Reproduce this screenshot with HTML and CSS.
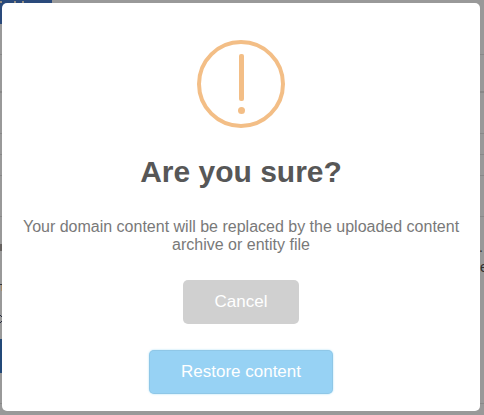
FILE: index.html
```html
<!DOCTYPE html>
<html lang="en">
<head>
<meta charset="utf-8">
<title>Restore content</title>
<link rel="stylesheet" href="styles.css">
</head>
<body>
<div class="page" aria-hidden="true">
  <div class="row row-top"><div class="tab"><svg width="52" height="3"><path d="M0 2h2M14 2h2M22 2h2" stroke="#958f84" stroke-width="2"/></svg></div></div>
  <div class="row row-head"></div>
  <div class="row row-tall"></div>
  <div class="row row-line"></div>
  <div class="row row-line"></div>
  <div class="row row-tall"></div>
  <div class="row row-body">
    <div class="side">
      <svg class="traces" width="2" height="122"><path d="M0 27h2v7H0z" fill="#65615f"/><path d="M0 67h2v1H0z" fill="#30343b"/><path d="M1 68h1v6H1z" fill="#a58b6b"/><path d="M0 98h1v1H0zM1 99h1v1H1zM1 104h1v1H1zM0 105h1v1H0z" fill="#252b3d"/></svg>
      <div class="action"></div>
    </div>
    <div class="remainder"><span>.</span><span>e</span></div>
  </div>
  <div class="row row-end"></div>
</div>
<main class="modal" role="dialog" aria-labelledby="title">
  <svg class="icon" width="88" height="88" viewBox="0 0 88 88" aria-hidden="true">
    <circle cx="44" cy="44" r="42" fill="none" stroke="#f3be86" stroke-width="4"/>
    <rect x="42" y="14" width="5" height="47" rx="2" fill="#f3be86"/>
    <circle cx="44.5" cy="70.5" r="3.5" fill="#f3be86"/>
  </svg>
  <h2 class="title" id="title">Are you sure?</h2>
  <p class="message">Your domain content will be replaced by the uploaded content archive or entity file</p>
  <button class="button cancel">Cancel</button>
  <button class="button confirm">Restore content</button>
</main>
</body>
</html>
```
FILE: styles.css
```css
* { box-sizing: border-box; }
body {
  margin: 0;
  width: 484px;
  height: 415px;
  overflow: hidden;
  background: #999;
  font-family: "Liberation Sans", Arial, sans-serif;
}
.page { height: 415px; }
.row { border-bottom: 1px solid #888; }
.row-top { height: 55px; }
.tab { width: 52px; height: 24px; background: #2a4a7b; }
.tab svg { display: block; }
.row-head { height: 38px; border-bottom-width: 2px; }
.row-tall { height: 41px; }
.row-line { height: 21px; }
.row-body { height: 187px; display: flex; justify-content: space-between; }
.side { width: 2px; }
.traces { display: block; }
.action { height: 34px; background: #234978; }
.remainder {
  width: 4px;
  padding-top: 20px;
  font-size: 14px;
  line-height: 20px;
  color: #303030;
}
.remainder span { display: block; }
.remainder span:first-child { margin-left: -1px; }
.row-end { height: 12px; border: 0; }
.modal {
  position: absolute;
  left: 2px;
  top: 3px;
  width: 478px;
  height: 408px;
  padding: 37px 17px 17px;
  border-radius: 5px;
  background: #fff;
  display: flex;
  flex-direction: column;
  align-items: center;
  text-align: center;
}
.icon { display: block; flex: none; }
.title {
  margin: 24px 0 26px;
  font-size: 30px;
  line-height: 40px;
  font-weight: 600;
  color: #575757;
}
.message {
  margin: 0;
  font-size: 16px;
  line-height: 18px;
  font-weight: 300;
  color: #797979;
}
.button {
  flex: none;
  height: 44px;
  padding: 0 32px;
  border: 0;
  border-radius: 5px;
  font: 17px "Liberation Sans", Arial, sans-serif;
  color: #fff;
}
.cancel { margin-top: 26px; background: #d0d0d0; }
.confirm {
  margin-top: 26px;
  background: #97d2f4;
  box-shadow: 0 0 2px rgba(140, 212, 245, .8), inset 0 0 0 1px rgba(0, 0, 0, .05);
}
```
